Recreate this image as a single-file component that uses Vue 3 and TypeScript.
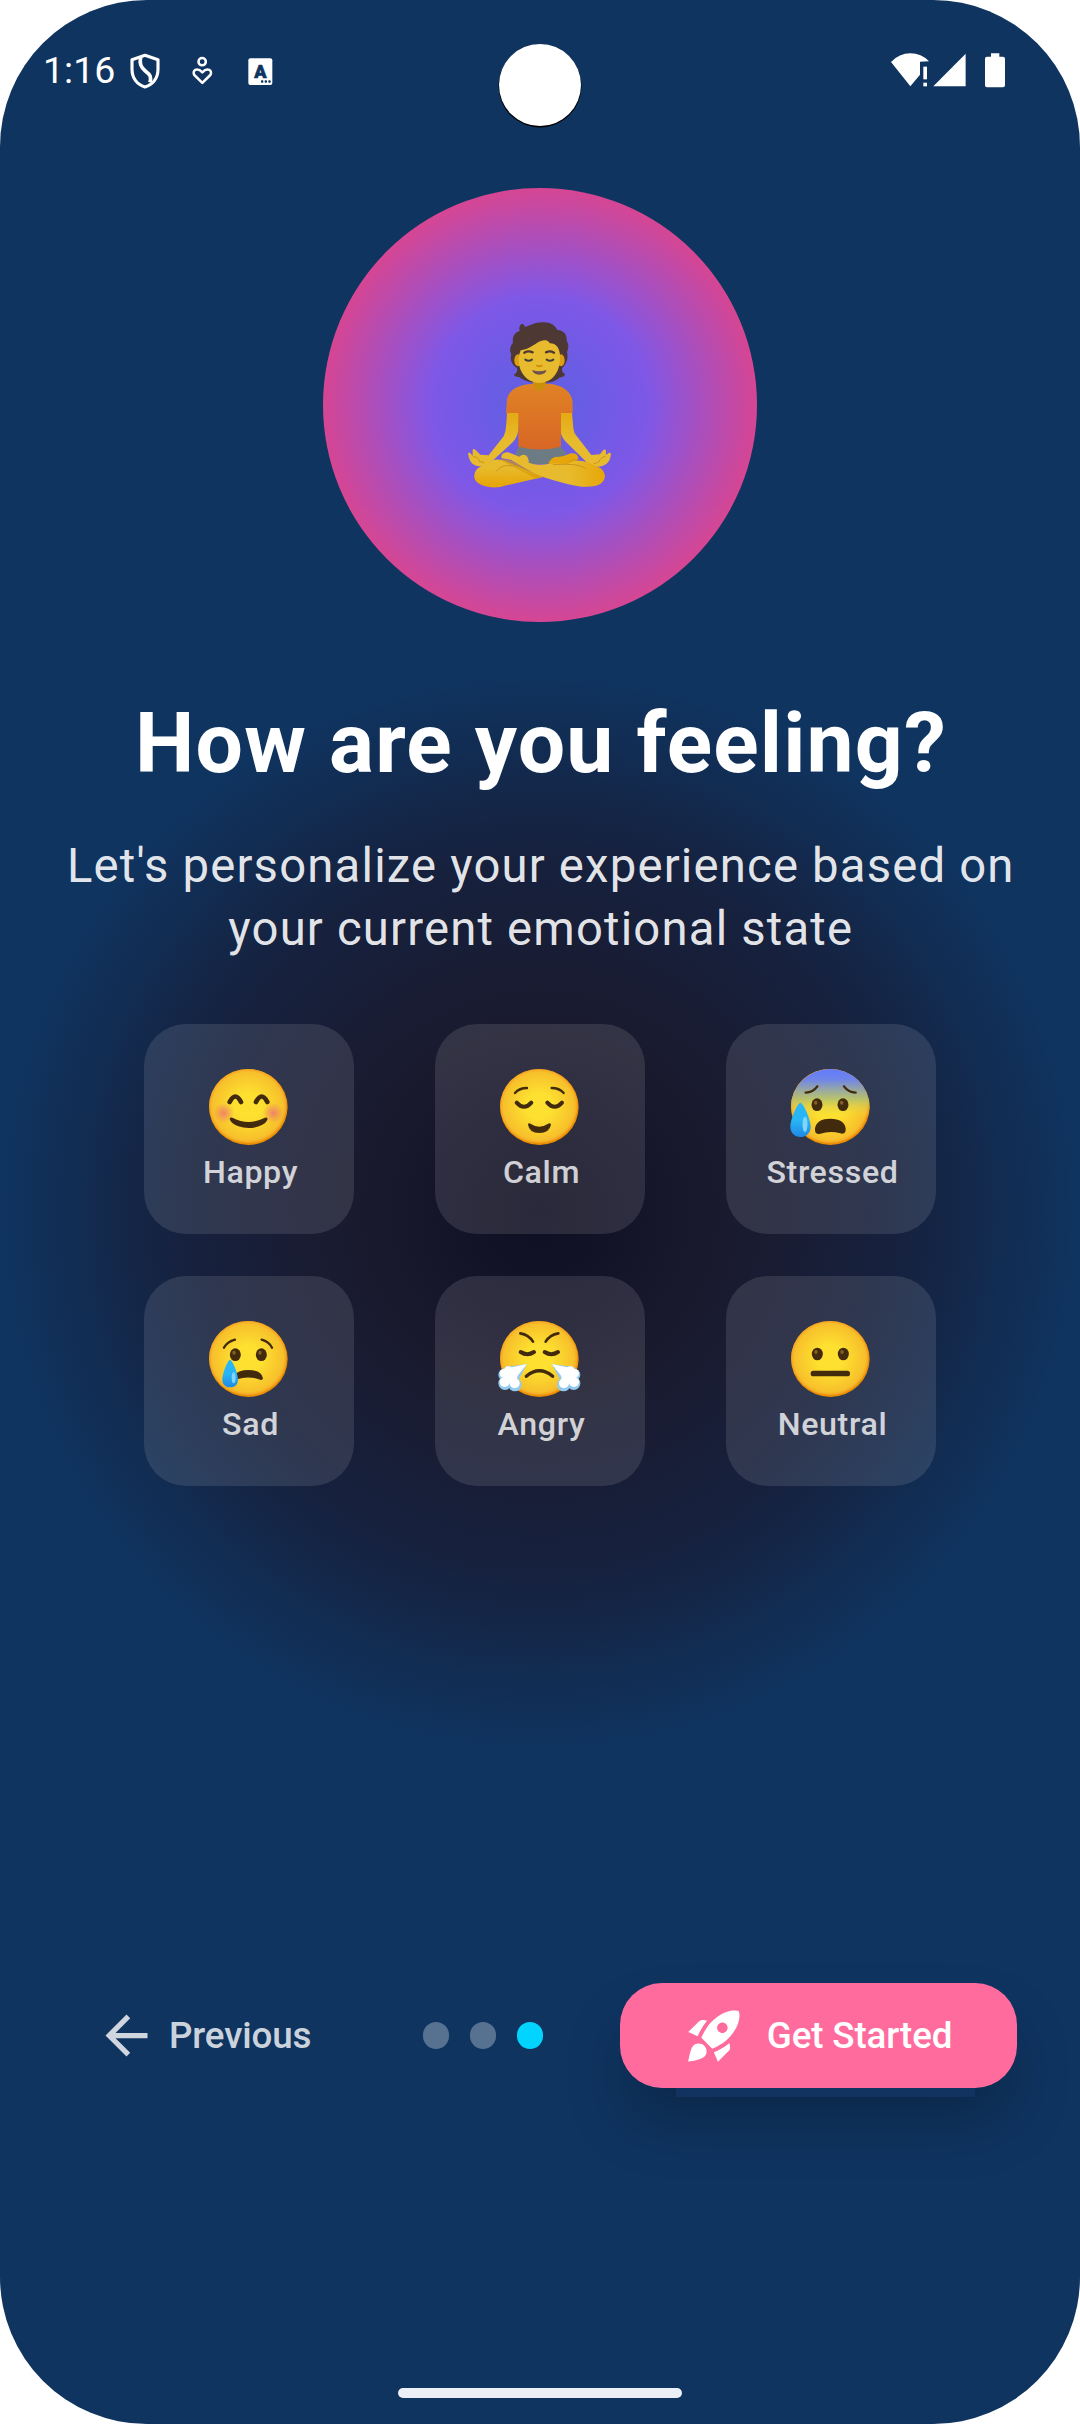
<script setup lang="ts">
interface Puff {
  x: number
  y: number
  r: number
}

interface Mood {
  id: string
  label: string
}

const moods: Mood[] = [
  { id: 'happy', label: 'Happy' },
  { id: 'calm', label: 'Calm' },
  { id: 'stressed', label: 'Stressed' },
  { id: 'sad', label: 'Sad' },
  { id: 'angry', label: 'Angry' },
  { id: 'neutral', label: 'Neutral' },
]

const steps: number[] = [0, 1, 2]
const activeStep = 2

const puffs: Puff[] = [
  { x: 211, y: 150, r: 15 },
  { x: 224, y: 157, r: 14 },
  { x: 222, y: 183, r: 16 },
  { x: 192, y: 187, r: 16 },
  { x: 203, y: 168, r: 20 },
]
</script>

<template>
  <div class="screen">
    <div class="camera"></div>

    <header class="status">
      <span class="time">1:16</span>
      <svg class="shield" viewBox="388 160 90 108">
        <g fill="none" stroke="#fff" stroke-linejoin="round">
          <path stroke-width="9.500" d="M433 167 L472 180 V208 C472 237 455 255 433 262 C411 255 394 237 394 208 V180Z" />
          <path stroke-width="11" d="M420 172 C416 192 420 202 434 214 C450 226 452 232 448 248" />
        </g>
      </svg>
      <svg class="wellness" viewBox="575 168 62 88">
        <g fill="none" stroke="#fff" stroke-width="7.500" stroke-linejoin="round">
          <circle cx="605.500" cy="185" r="11" />
          <path d="M606 249 L582 225 C574 212 590 200 606 217 C622 200 638 212 630 225Z" />
        </g>
      </svg>
      <svg class="caption" viewBox="743 173 74 82">
        <rect x="744" y="174" width="72" height="80" rx="6" fill="#fff" />
        <text x="780" y="232" text-anchor="middle" class="caption-letter">A</text>
        <g fill="#0f3460">
          <rect x="782" y="240" width="7" height="7" rx="2" />
          <rect x="793" y="240" width="7" height="7" rx="2" />
          <rect x="804" y="240" width="7" height="7" rx="2" />
        </g>
      </svg>
      <svg class="signals" viewBox="333 161 344 104">
        <g fill="#fff">
          <path d="M333 188 Q358 162 391 162 Q424 162 447 186 L420 187 V226 L391 261Z" />
          <rect x="430" y="202" width="11" height="38" />
          <rect x="430" y="250" width="11" height="11" />
          <path d="M460 261 L557 163 V261Z" />
          <path d="M633 162h25v10h11q6 0 6 6v80q0 6-6 6h-48q-6 0-6-6v-80q0-6 6-6h12z" />
        </g>
      </svg>
    </header>

    <main class="content">
      <div class="orb">
        <svg class="meditator" viewBox="84 66 430 498">
          <defs>
            <linearGradient id="shirt" x1="0" y1="0" x2="0" y2="1">
              <stop offset="0" stop-color="#f78c1f" />
              <stop offset="1" stop-color="#ee6c1f" />
            </linearGradient>
            <linearGradient id="arm" x1="0" y1="0" x2="0" y2="1">
              <stop offset="0" stop-color="#fdb60b" />
              <stop offset=".5" stop-color="#ffca28" />
            </linearGradient>
            <linearGradient id="legBack" x1="0" y1="0" x2="0" y2="1">
              <stop offset=".3" stop-color="#ffca28" />
              <stop offset=".9" stop-color="#ffb300" />
            </linearGradient>
            <linearGradient id="legFront" x1="0" y1="0" x2="1" y2="0">
              <stop offset=".65" stop-color="#ffca28" />
              <stop offset="1" stop-color="#ffb300" />
            </linearGradient>
          </defs>
          <path fill="#543930" d="M242 74 C247 68 252 73 255 81 C275 76 286 65 311 67 C332 67 345 76 352 90 C372 91 382 105 380 122 C388 134 385 148 381 156 C386 174 380 190 367 204 C364 214 370 221 376 221 C372 230 367 232 360 232 C342 249 320 249 298 248 C276 249 252 244 238 231 C229 232 224 228 221 223 C229 222 233 214 231 204 C216 195 209 180 214 163 C207 151 211 137 219 129 C216 110 224 97 239 93 C237 85 238 79 242 74Z" />
          <ellipse cx="234" cy="181" rx="11" ry="18" fill="#f5a90a" />
          <ellipse cx="363" cy="181" rx="11" ry="18" fill="#f5a90a" />
          <path fill="#e09a00" d="M279 235H317V262Q299 284 279 262Z" />
          <path fill="#ffca28" d="M242 151 C274 148 285 126 312 121 C321 119 326 124 330 130 C348 130 358 142 360 164 C363 213 340 247 298 249 C258 247 236 214 236 180 C236 168 239 159 242 151Z" />
          <g fill="none" stroke-linecap="round">
            <path stroke="#543930" stroke-width="7" d="M253 158Q265 151 278 157M318 157Q330 151 342 158" />
            <path stroke="#45423a" stroke-width="6" d="M256 179Q266 186 276 179M320 179Q330 186 340 179" />
            <path stroke="#e59600" stroke-width="6" d="M291 197Q298 201 305 197" />
          </g>
          <path fill="#795548" d="M277 210 Q298 218 319 210 Q318 223 298 224 Q279 223 277 210Z" />
          <path fill="url(#arm)" d="M201 338 H237 V374 Q236 408 218 427 L160 480 L134 499 Q113 502 98 492 Q87 482 84 459 L90 458 L98 468 V449 Q101 445 106 449 L121 464 L146 466 L191 409 Q198 394 199 371Z" />
          <path fill="url(#arm)" d="M361 338 H396 L399 371 Q400 394 406 403 L454 465 L480 463 L490 450 Q497 446 498 453 V465 L507 458 L513 460 Q512 482 499 492 Q482 504 464 499 L440 487 L376 424 Q360 408 361 374Z" />
          <path fill="#78838a" d="M235 440 H362 L380 460 L338 492 H270 L225 465Z" />
          <path fill="url(#shirt)" d="M279 251 Q298 281 317 251 C365 251 397 275 398 308 V339 H363 V440 Q300 457 235 440 V339 H198 L201 298 C207 270 231 254 279 251Z" />
          <path fill="#e29a00" d="M279 251Q298 281 317 251L315 262Q299 284 282 262Z" />
          <path fill="#ffb300" d="M325 491 Q337 467 354 471 Q373 469 392 460 Q411 457 415 473 L405 494Z" />
          <path fill="url(#legBack)" d="M160 480 Q180 475 207 488 L310 531 Q215 552 181 561 Q139 566 115 550 Q101 539 103 526 Q105 503 133 496Z" />
          <path fill="#eda700" d="M180 479 Q203 473 229 490 L312 530 L288 536Z" opacity=".65" />
          <path fill="url(#legFront)" d="M184 468 Q188 456 205 457 L238 470 Q249 461 259 467 Q268 475 266 488 Q291 499 328 491 Q352 490 382 492 Q412 475 446 488 L482 505 Q495 516 495 530 Q492 551 465 558 Q428 566 368 548 Q310 534 275 516 L213 480 Q195 476 184 475Z" />
          <g fill="none" stroke="#dda017" stroke-width="3" stroke-linecap="round">
            <path d="M170 513Q182 496 204 497L235 498M340 494Q420 488 438 506M387 486Q396 475 416 480M101 470Q116 470 118 484L132 488M496 469Q480 473 477 486L462 491" />
          </g>
        </svg>
      </div>

      <h1 class="title">How are you feeling?</h1>
      <p class="subtitle">Let's personalize your experience based on<br />your current emotional state</p>

      <div class="moods">
        <button v-for="mood in moods" :key="mood.id" type="button" class="mood">
          <svg class="face" viewBox="0 0 236 228">
            <defs>
              <radialGradient :id="`skin-${mood.id}`">
                <stop offset=".35" stop-color="#fde030" />
                <stop offset=".92" stop-color="#f7c02b" />
                <stop offset="1" stop-color="#f4a223" />
              </radialGradient>
              <linearGradient id="dread" x1="0" y1="0" x2="0" y2="1">
                <stop offset="0" stop-color="#637bfe" />
                <stop offset=".14" stop-color="#6f86e8" />
                <stop offset=".4" stop-color="#b3c26f" stop-opacity=".9" />
                <stop offset=".64" stop-color="#fde030" stop-opacity="0" />
              </linearGradient>
              <linearGradient id="tear" x1="0" y1="0" x2="0" y2="1">
                <stop offset=".5" stop-color="#29b6f6" />
                <stop offset="1" stop-color="#1e88e5" />
              </linearGradient>
            </defs>
            <ellipse cx="118" cy="114" rx="118" ry="114" fill="#eb8f00" />
            <ellipse cx="116.500" cy="111" rx="116" ry="111" :fill="`url(#skin-${mood.id})`" />

            <template v-if="mood.id === 'happy'">
              <defs>
                <radialGradient id="blush">
                  <stop offset="0" stop-color="#ed7770" stop-opacity=".85" />
                  <stop offset="1" stop-color="#ed7770" stop-opacity="0" />
                </radialGradient>
              </defs>
              <circle cx="44" cy="132" r="31" fill="url(#blush)" />
              <circle cx="193" cy="132" r="31" fill="url(#blush)" />
              <path class="line" stroke-width="14" d="M62 99Q79 66 96 99M141 99Q158 66 175 99" />
              <path class="ink" d="M62 150Q64 143 72 147Q118 171 166 147Q174 143 176 150Q172 164 150 172Q118 182 88 172Q65 163 62 150Z" />
            </template>

            <template v-else-if="mood.id === 'calm'">
              <path class="line" stroke-width="7" d="M155 57Q178 57 191 72M81 57Q58 57 45 72" />
              <path class="line" stroke-width="12" d="M142 101Q164 126 186 101M94 101Q72 126 50 101" />
              <path class="ink" d="M84 167Q85 160 93 165Q118 182 143 165Q152 159 153 167Q148 192 118 192Q88 192 84 167Z" />
            </template>

            <template v-else-if="mood.id === 'stressed'">
              <ellipse cx="118" cy="114" rx="118" ry="114" fill="url(#dread)" />
              <path class="line" stroke-width="7" d="M44 71Q66 70 79 52M159 52Q172 70 194 71" />
              <ellipse class="ink" cx="78" cy="107" rx="16.500" ry="19" />
              <ellipse class="ink" cx="156" cy="107" rx="16.500" ry="19" />
              <ellipse class="glint" cx="74" cy="101" rx="5" ry="6" />
              <ellipse class="glint" cx="152" cy="101" rx="5" ry="6" />
              <path class="ink" d="M72 178C76 158 92 149 118 149C146 149 162 160 164 178C165 193 158 196 148 193Q118 185 88 194C76 198 71 192 72 178Z" />
              <path fill="url(#tear)" d="M28 101C36 101 59 150 59 173C59 192 46 204 28 204C10 204 -2 190 -2 173C-2 150 20 101 28 101Z" />
              <ellipse cx="42" cy="166" rx="7.500" ry="23" fill="#81d4fa" />
            </template>

            <template v-else-if="mood.id === 'sad'">
              <path class="line" stroke-width="7" d="M45 80Q55 62 78 56M158 56Q180 62 189 80" />
              <ellipse class="ink" cx="79" cy="101" rx="16.500" ry="19" />
              <ellipse class="ink" cx="157" cy="101" rx="16.500" ry="19" />
              <ellipse class="glint" cx="75" cy="95" rx="5" ry="6" />
              <ellipse class="glint" cx="153" cy="95" rx="5" ry="6" />
              <path class="ink" d="M76 162Q90 147 118 147Q158 148 162 172Q160 179 154 176Q118 163 84 175Z" />
              <path fill="url(#tear)" d="M63 116C69 116 87 156 87 176C87 191 77 199 63 199C50 199 40 190 40 176C40 156 57 116 63 116Z" />
              <ellipse cx="74" cy="170" rx="6" ry="17" fill="#81d4fa" />
            </template>

            <template v-else-if="mood.id === 'angry'">
              <path class="line" stroke-width="8" d="M137 62Q150 41 175 37M99 62Q86 41 61 37" />
              <path class="line" stroke-width="12" d="M134 93Q154 106 174 93M102 93Q82 106 62 93" />
              <path class="line" stroke-width="10" d="M79 166Q118 133 158 166" />
              <g v-for="side in [0, 1]" :key="side" :transform="side ? 'translate(236 0) scale(-1 1)' : undefined">
                <g fill="#92cbef">
                  <path d="M155 129L204 136L178 172Z" />
                  <circle v-for="(p, i) in puffs" :key="i" :cx="p.x - 1" :cy="p.y + 4" :r="p.r + 4" />
                </g>
                <g fill="#fff">
                  <path d="M155 129L208 140L188 170Z" />
                  <circle v-for="(p, i) in puffs" :key="i" :cx="p.x" :cy="p.y" :r="p.r - 1" />
                </g>
              </g>
            </template>

            <template v-else>
              <ellipse class="ink" cx="79" cy="99" rx="16.500" ry="19" />
              <ellipse class="ink" cx="157" cy="99" rx="16.500" ry="19" />
              <ellipse class="glint" cx="75" cy="93" rx="5" ry="6" />
              <ellipse class="glint" cx="153" cy="93" rx="5" ry="6" />
              <rect class="ink" x="59" y="149" width="118" height="17" rx="8" />
            </template>
          </svg>
          <span class="mood-label">{{ mood.label }}</span>
        </button>
      </div>
    </main>

    <nav class="actions">
      <button type="button" class="previous">
        <svg class="icon" viewBox="0 0 24 24">
          <path fill="currentColor" d="M20 11H7.830l5.590-5.590L12 4l-8 8 8 8 1.410-1.410L7.830 13H20v-2z" />
        </svg>
        <span>Previous</span>
      </button>
      <div class="dots">
        <i v-for="step in steps" :key="step" class="dot" :class="{ active: step === activeStep }"></i>
      </div>
      <div class="start-wrap">
        <div class="shade-gap"></div>
        <button type="button" class="start">
          <svg class="icon" viewBox="0 0 24 24">
            <path fill="currentColor" d="M9.190 6.350c-2.040 2.290-3.440 5.580-3.570 5.890L2 10.690l4.050-4.050c.47-.47 1.150-.68 1.810-.55l1.330.26zM11.170 17s3.740-1.550 5.890-3.700c5.400-5.400 4.500-9.620 4.210-10.570-.95-.3-5.170-1.190-10.570 4.210C8.550 9.090 7 12.830 7 12.830L11.170 17zm6.480-2.190c-2.290 2.040-5.580 3.440-5.890 3.570L13.310 22l4.050-4.050c.47-.47.68-1.150.55-1.810l-.26-1.330zM9 18c0 .83-.34 1.580-.88 2.120C6.940 21.300 2 22 2 22s.7-4.940 1.880-6.120C4.420 15.340 5.170 15 6 15c1.660 0 3 1.340 3 3zm4-9c0-1.100.9-2 2-2s2 .9 2 2-.9 2-2 2-2-.9-2-2z" />
          </svg>
          <span>Get Started</span>
        </button>
      </div>
    </nav>

    <div class="handle"></div>
  </div>
</template>

<style>
body {
  margin: 0;
  background: #fff;
}
</style>

<style scoped>
.screen {
  position: relative;
  box-sizing: border-box;
  display: flex;
  flex-direction: column;
  width: 1080px;
  height: 2424px;
  padding-bottom: 26px;
  overflow: hidden;
  border-radius: 147px;
  background: radial-gradient(circle 540px at 540px 1212px, #0f0f23 0%, #1a1a2e 33.33%, #16213e 66.67%, #0f3460 100%);
  color: #fff;
  font-family: Roboto, "Liberation Sans", sans-serif;
}

button {
  margin: 0;
  padding: 0;
  border: 0;
  background: none;
  color: inherit;
  font: inherit;
  letter-spacing: inherit;
}

svg {
  display: block;
  flex: none;
  overflow: visible;
}

.camera {
  position: absolute;
  top: 44px;
  left: 499px;
  width: 82px;
  height: 82px;
  border-radius: 50%;
  background: #fff;
  box-shadow: 0 1px 0 0.500px #000;
}

.status {
  display: flex;
  align-items: flex-start;
  box-sizing: border-box;
  height: 142px;
  padding: 53.300px 74px 0 43px;
}

.time {
  width: 86.500px;
  margin-top: -5px;
  font-size: 37.500px;
  line-height: 44px;
}

.shield {
  width: 30px;
  height: 36px;
}

.wellness {
  width: 20.670px;
  height: 29.330px;
  margin: 2.700px 0 0 32.200px;
}

.caption {
  width: 24.670px;
  height: 27.330px;
  margin: 4.300px 0 0 35.600px;
}

.caption-letter {
  fill: #0f3460;
  stroke: #0f3460;
  stroke-width: 2px;
  font-size: 54px;
  font-weight: 900;
}

.signals {
  width: 114.670px;
  height: 34.670px;
  margin-left: auto;
}

.content {
  display: flex;
  flex-direction: column;
  align-items: center;
}

.orb {
  display: flex;
  align-items: center;
  justify-content: center;
  width: 434px;
  height: 434px;
  margin-top: 46px;
  border-radius: 50%;
  background: radial-gradient(circle closest-side, #6366f1 0%, #8b5cf6 50%, #ec4899 100%);
  opacity: 0.9;
}

.meditator {
  width: 143.300px;
  height: 166px;
}

.title {
  margin: 73px 0 0;
  padding-left: 2px;
  font-size: 84px;
  font-weight: 700;
  line-height: 98px;
  letter-spacing: 1.160px;
  white-space: nowrap;
}

.subtitle {
  margin: 42px 0 0;
  padding-left: 1.500px;
  color: rgba(255, 255, 255, 0.9);
  font-size: 47.250px;
  line-height: 63px;
  letter-spacing: 1.180px;
  text-align: center;
  white-space: nowrap;
}

.moods {
  display: grid;
  grid-template-columns: repeat(3, 210px);
  gap: 42px 81px;
  margin-top: 63px;
}

.mood {
  display: flex;
  flex-direction: column;
  align-items: center;
  box-sizing: border-box;
  height: 210px;
  padding-top: 45px;
  border-radius: 42px;
  background: rgba(255, 255, 255, 0.11);
}

.face {
  width: 78.670px;
  height: 76px;
  margin-right: 1px;
}

.line {
  fill: none;
  stroke: #422b0d;
  stroke-linecap: round;
}

.ink {
  fill: #422b0d;
}

.glint {
  fill: #896024;
}

.mood-label {
  margin-top: 7px;
  padding-left: 3px;
  color: rgba(255, 255, 255, 0.8);
  font-size: 32.200px;
  font-weight: 500;
  line-height: 40px;
  letter-spacing: 0.650px;
}

.actions {
  display: flex;
  align-items: center;
  height: 105px;
  margin-top: 497px;
  padding: 0 63px 0 95px;
  font-size: 36.750px;
  font-weight: 500;
  letter-spacing: -0.120px;
}

.previous {
  display: flex;
  align-items: center;
  width: 328px;
  gap: 11px;
  color: rgba(255, 255, 255, 0.8);
}

.icon {
  width: 63px;
  height: 63px;
}

.dots {
  display: flex;
  gap: 20.750px;
}

.dot {
  width: 26.250px;
  height: 26.250px;
  border-radius: 50%;
  background: rgba(255, 255, 255, 0.3);
}

.dot.active {
  background: #00d4ff;
}

.start-wrap {
  position: relative;
  width: 397px;
  height: 105px;
  margin-left: auto;
  border-radius: 42px;
  box-shadow: 0 36px 64px -10px rgba(0, 0, 0, 0.28);
}

.shade-gap {
  position: absolute;
  top: 60px;
  left: 56px;
  width: 299px;
  height: 54px;
  background: #12335f;
}

.start {
  position: relative;
  display: flex;
  align-items: center;
  box-sizing: border-box;
  width: 397px;
  height: 105px;
  padding-left: 62.750px;
  gap: 21px;
  border-radius: 42px;
  background: #ff6b9d;
}

.handle {
  width: 284px;
  height: 10px;
  margin: auto auto 0;
  border-radius: 5px;
  background: #eceff5;
}
</style>
